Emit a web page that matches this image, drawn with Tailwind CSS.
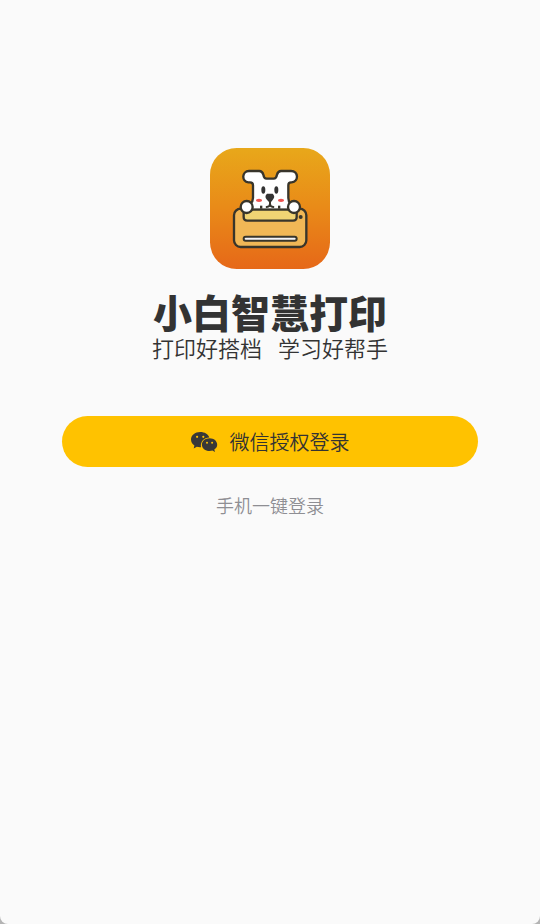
<!DOCTYPE html>
<html lang="zh-CN">
<head>
  <meta charset="UTF-8" />
  <meta name="viewport" content="width=device-width, initial-scale=1.0"/>
  <title>登录 | 小白智慧打印</title>
  <script src="https://cdn.jsdelivr.net/npm/@tailwindcss/browser@4"></script>
</head>
<body class="bg-[#b4b4b4] font-['Noto_Sans_CJK_SC',sans-serif] text-[#333333]">

  <main class="min-h-screen flex flex-col items-center rounded-b-lg bg-[#fafafa] px-[62px] pt-[148px]">

    <!-- Logo -->
    <svg class="w-[120px] h-[121px]" viewBox="0 0 360 363" role="img" aria-label="小白智慧打印">
      <defs>
        <linearGradient id="logoBg" x1="0" y1="0" x2="0" y2="1">
          <stop offset="0" stop-color="#e8a81a"/>
          <stop offset="0.5" stop-color="#e98a18"/>
          <stop offset="1" stop-color="#e66818"/>
        </linearGradient>
      </defs>
      <rect width="360" height="363" rx="80" fill="url(#logoBg)"/>
      <!-- Printer body -->
      <rect x="72" y="182" width="217" height="115" rx="20" fill="#f1b756" stroke="#38352b" stroke-width="7"/>
      <!-- Dog -->
      <path d="M121 186 V168 Q129 160 129 150 V112 Q129 103 120 103 H115 C94 101 95 69 117 69 H148 Q157 69 160 80 Q162 93 171 92 H191 Q199 92 201 80 Q204 69 213 69 H243 C266 69 267 101 245 103 H243 Q235 103 235 112 V150 Q235 160 242 168 V186 Z" fill="#fff" stroke="#38352b" stroke-width="7" stroke-linejoin="round"/>
      <ellipse cx="160" cy="126" rx="6" ry="11" fill="#333"/>
      <ellipse cx="199" cy="126" rx="6" ry="11" fill="#333"/>
      <path d="M171 137 H188 Q196 144 190 153 L184 161 H176 L169 153 Q163 144 171 137 Z" fill="#333"/>
      <path d="M180 159 V168 Q180 176 170 177 M180 168 Q180 176 190 177" fill="none" stroke="#38352b" stroke-width="6" stroke-linecap="round"/>
      <rect x="150" y="173" width="7" height="9" fill="#38352b"/>
      <rect x="204" y="173" width="7" height="9" fill="#38352b"/>
      <ellipse cx="147" cy="157" rx="9" ry="5" fill="#ee5350"/>
      <ellipse cx="213" cy="157" rx="9" ry="5" fill="#ee5350"/>
      <!-- Paper tray -->
      <path d="M101 185 H260 V207 Q260 218 249 218 H112 Q101 218 101 207 Z" fill="#f1d474" stroke="#38352b" stroke-width="7" stroke-linejoin="round"/>
      <circle cx="110" cy="177" r="18" fill="#fff" stroke="#38352b" stroke-width="7"/>
      <circle cx="252" cy="177" r="18" fill="#fff" stroke="#38352b" stroke-width="7"/>
      <circle cx="272" cy="207" r="6" fill="#38352b"/>
      <rect x="101" y="266" width="159" height="12" rx="6" fill="#f4f4f8" stroke="#38352b" stroke-width="6"/>
    </svg>

    <!-- App name -->
    <h1 class="mt-[22px] text-[39px] leading-10 font-black">小白智慧打印</h1>
    <p class="flex gap-4 text-[22px] leading-8 font-[350]">
      <span>打印好搭档</span>
      <span>学习好帮手</span>
    </p>

    <!-- Login -->
    <button type="button" class="mt-[53px] w-full h-[51px] flex items-center justify-center gap-3 rounded-full bg-[#ffc200] text-xl font-[350]">
      <svg class="w-[27px] h-5" viewBox="0 0 27 20" aria-hidden="true">
        <path d="M9.2 0 C4 0 0 3.3 0 7.6 C0 10.1 1.3 12.2 3.4 13.6 L2.7 16.4 L5.8 14.8 Q7.8 15.4 10 15.2 C9 9.5 13 5.5 18.3 5.4 C17.3 2.2 13.6 0 9.2 0 Z" fill="#383838"/>
        <path d="M18.6 6.3 C14.2 6.3 10.9 9.1 10.9 12.7 C10.9 16.3 14.2 19 18.6 19 Q20.1 19 21.4 18.6 L24 20 L23.3 17.5 C25.1 16.3 26.2 14.6 26.2 12.7 C26.2 9.1 22.9 6.3 18.6 6.3 Z" fill="#383838"/>
        <circle cx="6.1" cy="4.8" r="1.1" fill="#ffc200"/>
        <circle cx="12.3" cy="4.8" r="1.1" fill="#ffc200"/>
        <circle cx="16" cy="10.7" r="1" fill="#ffc200"/>
        <circle cx="21.1" cy="10.7" r="1" fill="#ffc200"/>
      </svg>
      微信授权登录
    </button>
    <a href="#phone" class="mt-[22px] text-lg leading-8 font-[350] text-[#8e8e93]">手机一键登录</a>

  </main>

</body>
</html>
